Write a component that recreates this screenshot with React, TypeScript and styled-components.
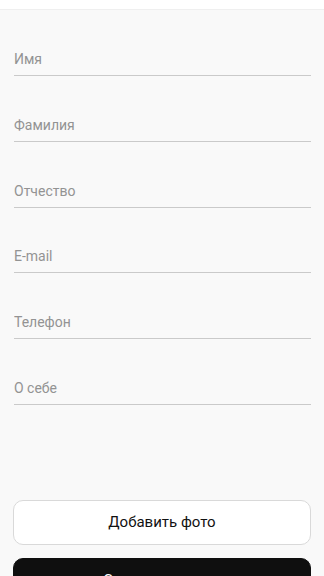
import styled, { createGlobalStyle } from "styled-components";

const GlobalStyle = createGlobalStyle`
  html, body {
    margin: 0;
    padding: 0;
    background: #f9f9f9;
    font-family: Roboto, "Noto Sans", Arial, sans-serif;
  }
  * {
    box-sizing: border-box;
  }
`;

const Page = styled.div`
  display: flex;
  flex-direction: column;
  width: 100%;
  min-height: 100vh;
  background: #f9f9f9;
`;

const TopBar = styled.div`
  height: 10px;
  background: #ffffff;
  border-bottom: 1px solid #efefef;
`;

const Form = styled.form`
  display: flex;
  flex-direction: column;
  gap: 32.8px;
  padding: 33px 13px 0 14px;
`;

const Field = styled.input`
  display: block;
  width: 100%;
  height: 33px;
  padding: 0;
  border: none;
  border-bottom: 1px solid #cacaca;
  background: transparent;
  font-family: inherit;
  font-size: 14px;
  color: #222;
  outline: none;

  &::placeholder {
    color: #939393;
  }
`;

const Actions = styled.div`
  display: flex;
  flex-direction: column;
  gap: 13px;
  padding: 95px 13px 0 13px;
`;

const Button = styled.button<{ $dark?: boolean }>`
  width: 100%;
  height: 45px;
  border-radius: 10px;
  border: 1px solid ${(p) => (p.$dark ? "#0f0f0f" : "#d9d9d9")};
  background: ${(p) => (p.$dark ? "#0f0f0f" : "#ffffff")};
  color: ${(p) => (p.$dark ? "#ffffff" : "#111111")};
  font-family: inherit;
  font-size: 15px;
  cursor: pointer;
`;

const fields = ["Имя", "Фамилия", "Отчество", "E-mail", "Телефон", "О себе"];

function App() {
  return (
    <>
      <GlobalStyle />
      <Page>
        <TopBar />
        <Form onSubmit={(e) => e.preventDefault()}>
          {fields.map((f) => (
            <Field key={f} type="text" placeholder={f} />
          ))}
        </Form>
        <Actions>
          <Button type="button">Добавить фото</Button>
          <Button type="button" $dark>
            Создать аккаунт
          </Button>
        </Actions>
      </Page>
    </>
  );
}

export default App;
